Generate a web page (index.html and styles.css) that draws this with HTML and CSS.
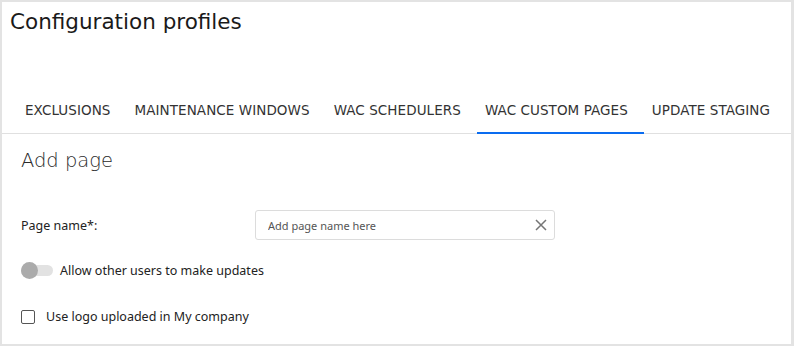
FILE: index.html
```html
<!DOCTYPE html>
<html lang="en">
<head>
  <meta charset="UTF-8" />
  <title>Configuration profiles</title>
  <link rel="stylesheet" href="styles.css">
</head>
<body>
  <div class="page">
    <header class="page-header">
      <h1>Configuration profiles</h1>
    </header>

    <nav class="tabs">
      <div class="tab">EXCLUSIONS</div>
      <div class="tab">MAINTENANCE WINDOWS</div>
      <div class="tab">WAC SCHEDULERS</div>
      <div class="tab active">WAC CUSTOM PAGES</div>
      <div class="tab">UPDATE STAGING</div>
    </nav>

    <section class="content">
      <h2>Add page</h2>

      <div class="field-row">
        <label for="pageName">Page name*:</label>
        <div class="input-box">
          <input type="text" id="pageName" placeholder="Add page name here" />
          <svg class="clear-icon" width="12" height="12" viewBox="0 0 12 12">
            <path d="M1 1 L11 11 M11 1 L1 11" stroke="#757575" stroke-width="1.5" fill="none" />
          </svg>
        </div>
      </div>

      <div class="toggle-row">
        <span class="toggle"><span class="knob"></span></span>
        <span>Allow other users to make updates</span>
      </div>

      <div class="check-row">
        <span class="checkbox"></span>
        <span>Use logo uploaded in My company</span>
      </div>
    </section>
  </div>
</body>
</html>
```

FILE: styles.css
```css
:root {
  --frame: #e3e3e3;
  --line: #e0e0e0;
  --text: #222;
  --blue: #0a6cf0;
}

body {
  margin: 0;
  background: var(--frame);
  font-family: "Noto Sans", "Open Sans", sans-serif;
  color: var(--text);
}

.page {
  margin: 2px 0 0 2px;
  width: 789px;
  height: 342px;
  background: #fff;
}

.page-header {
  padding: 8px 8px 0;
  height: 88px;
}

h1 {
  margin: 0;
  font-family: "DejaVu Sans", sans-serif;
  font-weight: normal;
  font-size: 21.5px;
  line-height: 24px;
  color: #1a1a1a;
}

.tabs {
  display: flex;
  padding-left: 15px;
  border-bottom: 1px solid var(--line);
}

.tab {
  padding: 3px 16px 13px 8px;
  font-family: "DejaVu Sans", sans-serif;
  font-size: 13.5px;
  line-height: 18px;
  letter-spacing: 0.07px;
  color: #333;
  border-bottom: 2px solid transparent;
  margin-bottom: -1px;
}

.tab.active {
  border-bottom-color: var(--blue);
}

.content {
  padding: 0 19px;
}

h2 {
  margin: 16px 0 0;
  font-family: "DejaVu Sans", sans-serif;
  font-weight: 300;
  font-size: 19.5px;
  line-height: 22px;
  color: #2a2a2a;
}

.field-row {
  display: flex;
  align-items: center;
  margin-top: 38px;
  font-size: 12.5px;
}

.field-row label {
  width: 234px;
}

.input-box {
  box-sizing: border-box;
  width: 300px;
  height: 30px;
  border: 1px solid #dcdcdc;
  border-radius: 3px;
  display: flex;
  align-items: center;
  padding: 0 7px 0 12px;
}

.input-box input {
  flex: 1;
  border: none;
  outline: none;
  font-family: "Noto Sans", sans-serif;
  font-size: 11px;
  padding: 0;
  color: #333;
}

.input-box input::placeholder {
  color: #555;
}

.toggle-row,
.check-row {
  display: flex;
  align-items: center;
  font-size: 12.5px;
}

.toggle-row {
  margin-top: 22px;
  gap: 7px;
}

.toggle {
  position: relative;
  width: 32px;
  height: 11px;
  border-radius: 6px;
  background: #e2e2e2;
}

.knob {
  position: absolute;
  left: 0;
  top: -3px;
  width: 17px;
  height: 17px;
  border-radius: 50%;
  background: #ababab;
}

.check-row {
  margin-top: 29px;
  gap: 11px;
}

.checkbox {
  width: 12px;
  height: 12px;
  border: 1.5px solid #555;
  border-radius: 2px;
}
```
